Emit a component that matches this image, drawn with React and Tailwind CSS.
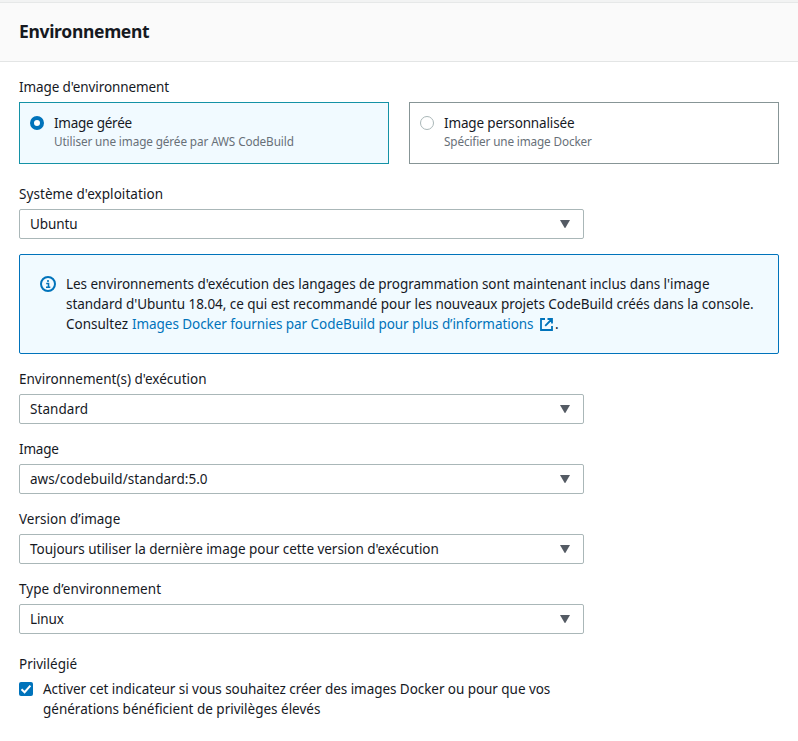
function Txt({ className = "", children }) {
  return <span className={`whitespace-nowrap ${className}`}>{children}</span>;
}

function Label({ children, track }) {
  return (
    <div className="h-5 leading-5">
      <Txt className={track}>{children}</Txt>
    </div>
  );
}

function Select({ label, labelTrack, value, valueTrack }) {
  return (
    <div className="flex flex-col gap-[5px]">
      <Label track={labelTrack}>{label}</Label>
      <div className="flex h-[30px] w-[565px] items-center justify-between rounded-[2px] border border-[#aab7b8] bg-white pl-[10px] pr-[13px]">
        <Txt className={valueTrack}>{value}</Txt>
        <svg width="10" height="8" viewBox="0 0 10 8" fill="#545b64">
          <path d="M0 0h10L5.6 7.6a.7.7 0 0 1-1.2 0z" />
        </svg>
      </div>
    </div>
  );
}

function Tile({ selected, title, titleTrack, text, textTrack }) {
  const tone = selected ? "border-[#1492a6] bg-[#f1faff]" : "border-[#879596] bg-white";
  const dot = selected ? "border-4 border-[#0073bb]" : "border border-[#aab7b8]";
  return (
    <div className={`flex h-[62px] flex-1 gap-[10px] border px-[10px] pt-[10px] ${tone}`}>
      <span className={`mt-[3px] size-[14px] shrink-0 rounded-full bg-white ${dot}`} />
      <div className="flex flex-col">
        <Txt className={`leading-5 ${titleTrack}`}>{title}</Txt>
        <Txt className={`text-[11.75px] leading-4 text-[#687078] ${textTrack}`}>{text}</Txt>
      </div>
    </div>
  );
}

export default function App() {
  return (
    <div className="h-[741px] w-[798px] overflow-hidden bg-white font-['Noto_Sans','Open_Sans',sans-serif] text-[13.5px] leading-5 text-[#16191f]">
      <div className="h-[3px] border-b border-[#e6e8e8] bg-[#f2f3f3]" />
      <header className="flex h-[59px] items-center border-b border-[#e3e5e5] bg-[#fafafa] px-[19px] pb-[3px]">
        <h2 className="text-[17.5px] font-bold">
          <Txt className="tracking-[-0.32px]">Environnement</Txt>
        </h2>
      </header>
      <main className="flex flex-col px-[19px] pt-[15px]">
        <Label track="tracking-[-0.11px]">Image d'environnement</Label>
        <div className="mt-[5px] flex gap-5">
          <Tile
            selected
            title="Image gérée"
            titleTrack="tracking-[-0.25px]"
            text="Utiliser une image gérée par AWS CodeBuild"
            textTrack="tracking-[-0.11px]"
          />
          <Tile
            title="Image personnalisée"
            titleTrack="tracking-[-0.15px]"
            text="Spécifier une image Docker"
            textTrack="tracking-[-0.14px]"
          />
        </div>
        <div className="mt-5">
          <Select label="Système d'exploitation" labelTrack="tracking-[0.06px]" value="Ubuntu" valueTrack="tracking-[-0.1px]" />
        </div>
        <div className="mt-[15px] flex h-[100px] gap-[10px] rounded-[2px] border border-[#0073bb] bg-[#f1faff] pl-5 pt-[19px]">
          <svg className="mt-[2px] shrink-0" width="16" height="16" viewBox="0 0 16 16" fill="none" stroke="#0073bb">
            <circle cx="8" cy="8" r="7" strokeWidth="2" />
            <path d="M8 4v2M6.2 7.5H8.5V11M6 11.2h4.3" strokeWidth="1.6" />
          </svg>
          <div className="flex flex-col">
            <Txt className="tracking-[-0.04px]">
              Les environnements d'exécution des langages de programmation sont maintenant inclus dans l'image
            </Txt>
            <Txt className="tracking-[-0.04px]">
              standard d'Ubuntu 18.04, ce qui est recommandé pour les nouveaux projets CodeBuild créés dans la console.
            </Txt>
            <div className="flex items-center">
              <Txt className="w-[66px]">Consultez</Txt>
              <Txt className="w-[408px] tracking-[-0.06px] text-[#0073bb]">
                Images Docker fournies par CodeBuild pour plus d’informations
              </Txt>
              <svg width="13" height="13" viewBox="0 0 13 13" fill="none" stroke="#0073bb" strokeWidth="1.8">
                <path d="M5 1H1v11h11V8M7.5 1H12v4.5M12 1 5.2 7.8" />
              </svg>
              <Txt className="ml-[2px]">.</Txt>
            </div>
          </div>
        </div>
        <div className="mt-[15px] flex flex-col gap-[15px]">
          <Select label="Environnement(s) d'exécution" value="Standard" valueTrack="tracking-[0.05px]" />
          <Select label="Image" labelTrack="tracking-[-0.2px]" value="aws/codebuild/standard:5.0" valueTrack="tracking-[0.04px]" />
          <Select
            label="Version d’image"
            value="Toujours utiliser la dernière image pour cette version d'exécution"
            valueTrack="tracking-[-0.04px]"
          />
          <Select label="Type d’environnement" labelTrack="tracking-[0.06px]" value="Linux" valueTrack="tracking-[-0.1px]" />
        </div>
        <div className="mt-5 flex flex-col gap-[5px]">
          <Label>Privilégié</Label>
          <div className="flex gap-[10px]">
            <span className="mt-[3px] flex size-[14px] shrink-0 items-center justify-center rounded-[2px] bg-[#0073bb]">
              <svg width="14" height="14" viewBox="0 0 14 14" fill="none" stroke="#fff" strokeWidth="2">
                <path d="M2.5 7.2 5.6 10.2 11.4 3.6" />
              </svg>
            </span>
            <div className="flex flex-col">
              <Txt className="tracking-[-0.055px]">
                Activer cet indicateur si vous souhaitez créer des images Docker ou pour que vos
              </Txt>
              <Txt>générations bénéficient de privilèges élevés</Txt>
            </div>
          </div>
        </div>
      </main>
    </div>
  );
}
